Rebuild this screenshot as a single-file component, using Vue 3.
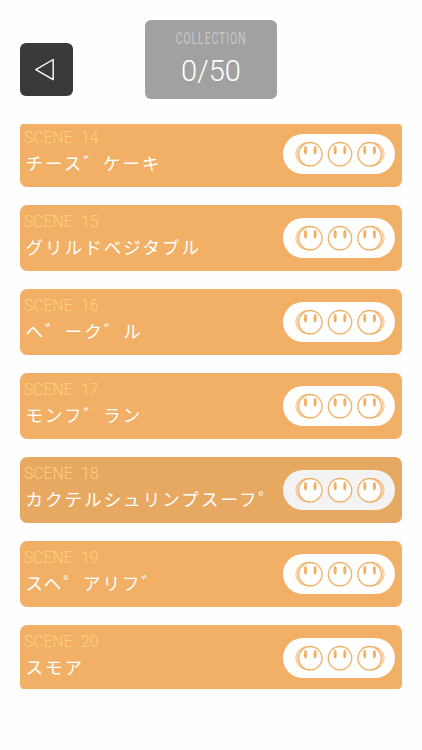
<template>
  <main class="screen">
    <header class="top">
      <button type="button" class="back" aria-label="back">
        <svg width="53" height="53" viewBox="0 0 53 53">
          <path d="M33.2 16.5V36.7L15.8 26.6Z" />
        </svg>
      </button>
      <div class="counter">
        <div class="counter-label"><span>COLLECTION</span></div>
        <div class="counter-value">{{ found }}/{{ total }}</div>
      </div>
    </header>

    <div class="viewport">
      <ul class="list">
        <li
          v-for="s in scenes"
          :key="s.no"
          class="card"
          :class="{ pressed: s.no === pressed }"
          @click="pressed = s.no"
        >
          <div class="text">
            <div class="scene">SCENE {{ s.no }}</div>
            <div class="title">{{ s.title }}</div>
          </div>
          <div class="pill">
            <svg width="112" height="40" viewBox="0 0 112 40">
              <g class="echo">
                <circle cx="24.2" cy="20.2" r="11.4" />
                <circle cx="25.8" cy="20.2" r="11.8" />
                <circle cx="89.8" cy="20.2" r="11.4" />
                <circle cx="88.2" cy="20.2" r="11.8" />
              </g>
              <g v-for="x in faces" :key="x">
                <circle class="face" :cx="x" cy="20.2" r="11.7" />
                <ellipse class="eye" :cx="x - 4.8" cy="16.3" rx="1.5" ry="4.3" />
                <ellipse class="eye" :cx="x + 4.8" cy="16.3" rx="1.5" ry="4.3" />
              </g>
            </svg>
          </div>
        </li>
      </ul>
    </div>
  </main>
</template>

<script setup>
import { ref } from 'vue'

const found = ref(0)
const total = 50
const pressed = ref(18)
const faces = [27.3, 57, 86.6] // face centres inside the pill

// some titles carry a separate full-width voicing mark
const scenes = [
  { no: 14, title: 'チース゛ケーキ' },
  { no: 15, title: 'グリルドベジタブル' },
  { no: 16, title: 'ヘ゛ーク゛ル' },
  { no: 17, title: 'モンフ゛ラン' },
  { no: 18, title: 'カクテルシュリンプスーフ゜' },
  { no: 19, title: 'スヘ゜アリフ゛' },
  { no: 20, title: 'スモア' },
]
</script>

<style>
body {
  background: #fefefe;
}
</style>

<style scoped>
.screen {
  box-sizing: border-box;
  width: 422px;
  height: 750px;
  padding: 20px 20px 0;
  overflow: hidden;
  font-family: Roboto, 'Noto Sans CJK JP', sans-serif;
}

.top {
  display: flex;
  align-items: flex-start;
  height: 104px;
}
.back {
  width: 53px;
  height: 53px;
  margin: 23px 72px 0 0;
  padding: 0;
  border: 0;
  border-radius: 6px;
  background: #3a3a3a;
  cursor: pointer;
}
.back svg {
  display: block;
}
.back path {
  fill: none;
  stroke: #fff;
  stroke-width: 1.4;
  stroke-linejoin: round;
}

.counter {
  width: 132px;
  height: 79px;
  border-radius: 6px;
  background: #a1a1a1;
  text-align: center;
}
.counter-label {
  display: flex;
  justify-content: center;
  padding-top: 8px;
  height: 20px;
  line-height: 20px;
  font-size: 17px;
  font-weight: 400;
  color: #c8c8c8;
}
.counter-label span {
  letter-spacing: 1.4px;
  transform: scaleX(0.62);
}
.counter-value {
  height: 46px;
  line-height: 46px;
  font-size: 29px;
  font-weight: 300;
  color: #fff;
}

.viewport {
  height: 565px;
  overflow: hidden;
  border-radius: 3px;
}
.list {
  display: flex;
  flex-direction: column;
  gap: 18px;
  margin: -3px 0 0;
  padding: 0;
  list-style: none;
}
.card {
  box-sizing: border-box;
  display: flex;
  justify-content: space-between;
  flex: none;
  height: 66px;
  padding: 0 7px 0 4px;
  border-radius: 7px;
  background: #f2b066;
  cursor: pointer;
}
.text {
  white-space: nowrap;
}
.scene {
  padding-top: 6px;
  height: 20px;
  line-height: 20px;
  font-size: 17px;
  font-weight: 300;
  word-spacing: 5px;
  color: #ffd07a;
  transform: scaleX(0.925);
  transform-origin: left;
}
.title {
  height: 30px;
  padding-left: 1.5px;
  line-height: 31px;
  font-family: 'Noto Sans CJK JP', sans-serif;
  font-size: 17.5px;
  font-weight: 400;
  letter-spacing: 2.05px;
  color: #fff;
}

.pill {
  width: 112px;
  height: 40px;
  margin-top: 13px;
  border-radius: 20px;
  background: #fff;
}
.pill svg {
  display: block;
}
.echo {
  fill: none;
  stroke: #f2b066;
  stroke-width: 0.7;
}
.face {
  fill: #fff;
  stroke: #f2b066;
  stroke-width: 1.3;
}
.eye {
  fill: #f2b066;
}

.pressed {
  background: #e7a961;
}
.pressed .pill {
  background: #f3f3f3;
}
</style>
